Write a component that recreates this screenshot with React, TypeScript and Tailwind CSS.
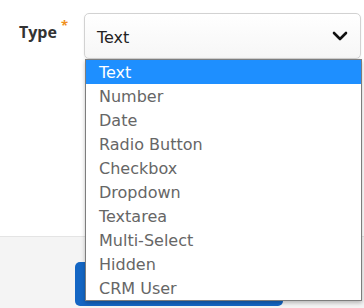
import React from "react";

const options = [
  "Text",
  "Number",
  "Date",
  "Radio Button",
  "Checkbox",
  "Dropdown",
  "Textarea",
  "Multi-Select",
  "Hidden",
  "CRM User",
];

export default function App() {
  const [selected] = React.useState("Text");

  return (
    <div className="relative w-[364px] h-[308px] overflow-hidden bg-white flex flex-col">
      {/* form row */}
      <div className="h-[236px] flex items-start pt-[13px] pl-[19px]">
        <div className="w-[65px] pt-[9px] flex items-start font-['Open_Sans',sans-serif] text-[16px] font-bold text-[#333] leading-[20px]">
          <span>Type</span>
          <span className="text-[#f0901e] text-[13px] leading-[13px] ml-[4px] -mt-[3px]">*</span>
        </div>
        <div className="w-[277px] h-[46px] rounded-[5px] border border-[#d2d2d2] bg-gradient-to-b from-white to-[#f6f6f6] shadow-[0_1px_2px_rgba(0,0,0,0.08)] flex items-center justify-between pl-[12px] pr-[12px] font-['DejaVu_Sans',sans-serif] text-[16px] text-[#222]">
          <span className="pt-[3px]">{selected}</span>
          <svg width="16" height="10" viewBox="0 0 16 10" fill="none">
            <path d="M2 2l6 6 6-6" stroke="#111" strokeWidth="2.6" strokeLinecap="round" strokeLinejoin="round" />
          </svg>
        </div>
      </div>

      {/* footer */}
      <div className="flex-1 border-t border-[#e4e4e4] bg-[#f4f4f4] pt-[25px] pl-[75px]">
        <div className="w-[208px] h-[44px] rounded-[5px] bg-[#1466c4]" />
      </div>

      {/* open list */}
      <ul className="absolute left-[85px] top-[59px] w-[277px] border border-[#7d7d7d] bg-white shadow-[0_2px_4px_rgba(0,0,0,0.25)] font-['DejaVu_Sans',sans-serif] text-[16px]">
        {options.map((o) => (
          <li
            key={o}
            className={`h-[24px] pl-[13px] pt-[1px] flex items-center ${
              o === selected ? "bg-[#1e8fff] text-white" : "text-[#666]"
            }`}
          >
            {o}
          </li>
        ))}
      </ul>
    </div>
  );
}
